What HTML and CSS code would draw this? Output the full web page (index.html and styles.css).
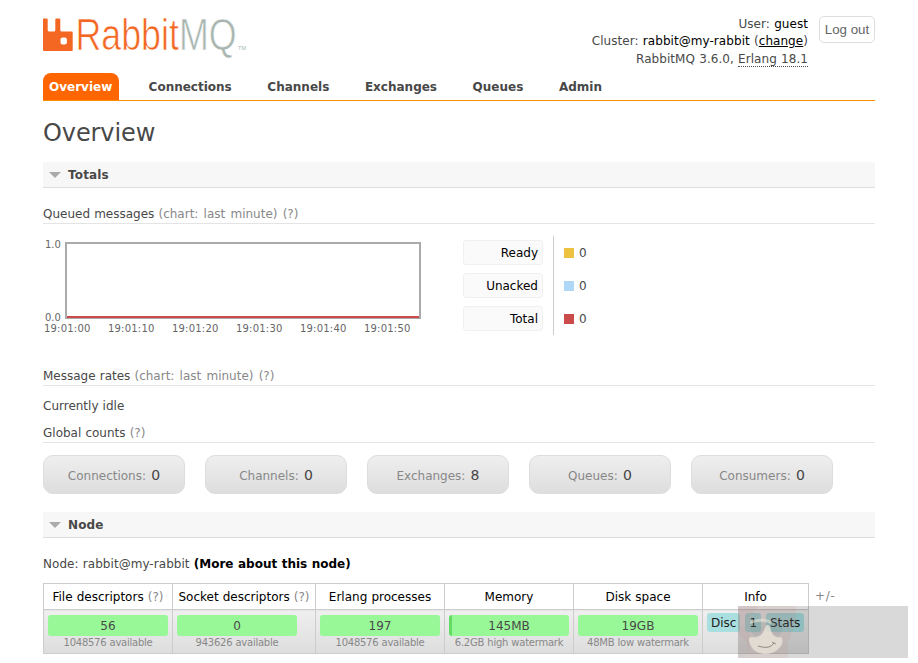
FILE: index.html
```html
<!DOCTYPE html>
<html lang="en">
<head>
  <meta charset="UTF-8">
  <title>RabbitMQ Management</title>
  <link rel="stylesheet" href="styles.css">
</head>
<body>
  <div id="head">
    <div class="logo">
      <svg width="204" height="36" viewBox="0 0 204 36">
        <path fill="#f36722" d="M1 3.500h2.700q1 0 1 1v10.500q0 1.500 1.500 1.500h4.600q1.500 0 1.500-1.500V4.500q0-1 1-1h3q1 0 1 1v10.500q0 1.500 1.500 1.500h9.900q1 0 1 1v17.500q0 1-1 1H1q-1 0-1-1V4.500q0-1 1-1zM19.500 22.500q-2 0-2 2v3q0 2 2 2h2.400q2 0 2-2V24.500q0-2-2-2z" fill-rule="evenodd"/>
        <text class="logo-text" x="32.500" y="35" textLength="161" lengthAdjust="spacingAndGlyphs">Rabbit<tspan class="logo-mq">MQ</tspan></text>
        <text class="logo-tm" x="195" y="35" textLength="8" lengthAdjust="spacingAndGlyphs">TM</text>
      </svg>
    </div>
    <div class="login">
      <div class="status">
        <p>User: <b>guest</b></p>
        <p>Cluster: <b>rabbit@my-rabbit</b> (<a href="#">change</a>)</p>
        <p>RabbitMQ 3.6.0, <abbr>Erlang 18.1</abbr></p>
      </div>
      <button class="logout">Log out</button>
    </div>
  </div>

  <ul class="menu">
    <li class="selected">Overview</li>
    <li>Connections</li>
    <li>Channels</li>
    <li>Exchanges</li>
    <li>Queues</li>
    <li>Admin</li>
  </ul>

  <div class="main">
    <h1>Overview</h1>

    <h2>Totals</h2>
    <h3 class="queued">Queued messages <span class="help">(chart: last minute) (?)</span></h3>
    <div class="chart-row">
      <div class="chart">
        <div class="y-axis"><span>1.0</span><span>0.0</span></div>
        <div class="plot"></div>
        <div class="x-axis">
          <span>19:01:00</span><span>19:01:10</span><span>19:01:20</span><span>19:01:30</span><span>19:01:40</span><span>19:01:50</span>
        </div>
      </div>
      <div class="legend-names">
        <span>Ready</span>
        <span>Unacked</span>
        <span>Total</span>
      </div>
      <div class="legend-values">
        <span><i class="ready"></i>0</span>
        <span><i class="unacked"></i>0</span>
        <span><i class="total"></i>0</span>
      </div>
    </div>

    <h3 class="rates">Message rates <span class="help">(chart: last minute) (?)</span></h3>
    <p class="idle">Currently idle</p>
    <h3 class="global">Global counts <span class="help">(?)</span></h3>
    <div class="counts">
      <div>Connections: <b>0</b></div>
      <div>Channels: <b>0</b></div>
      <div>Exchanges: <b>8</b></div>
      <div>Queues: <b>0</b></div>
      <div>Consumers: <b>0</b></div>
    </div>

    <h2>Node</h2>
    <p class="node">Node: rabbit@my-rabbit <a href="#">(More about this node)</a></p>
    <div class="node-row">
      <table>
        <colgroup><col class="fd"><col class="sd"><col class="std"><col class="std"><col class="std"><col class="info"></colgroup>
        <tr>
          <th>File descriptors <span class="help">(?)</span></th>
          <th>Socket descriptors <span class="help">(?)</span></th>
          <th>Erlang processes</th>
          <th>Memory</th>
          <th>Disk space</th>
          <th>Info</th>
        </tr>
        <tr>
          <td><div class="bar">56</div><small>1048576 available</small></td>
          <td><div class="bar">0</div><small>943626 available</small></td>
          <td><div class="bar">197</div><small>1048576 available</small></td>
          <td><div class="bar used">145MB</div><small>6.2GB high watermark</small></td>
          <td><div class="bar">19GB</div><small>48MB low watermark</small></td>
          <td><div class="tags"><span>Disc</span><span>1</span><span>Stats</span></div></td>
        </tr>
      </table>
      <span class="columns">+/-</span>
    </div>
  </div>

  <!-- translucent mascot badge over the bottom corner -->
  <div class="badge">
    <svg width="64" height="52" viewBox="0 0 64 52">
      <path d="M0 0H22Q12 6 12 20V36L8 52H0z" fill="#b99" opacity=".15"/>
      <path d="M0 0H58V16L50 36V52H9V36L0 28z" fill="#c98484" opacity=".13"/>
      <path d="M11 17Q28 12 46 18L43 28Q39 32 35 27L32 20H27L24 28Q17 32 13 26z" fill="#5f8484" opacity=".13"/>
      <path d="M12 15Q25 10 34 15L33 18Q22 14 12 18z" fill="#eee9d8" opacity=".5"/>
      <path d="M28 20Q31 16 33 25Q36 33 43 31Q46 34 43 40Q37 48 27 48Q15 47 12 38Q9 31 14 31Q24 33 28 20z" fill="#ece7db" opacity=".75"/>
      <path d="M20 40Q32 44 36 37M34 36l4 2" fill="none" stroke="#8f8b83" stroke-width="1"/>
    </svg>
  </div>
</body>
</html>
```
FILE: styles.css
```css
* {
  box-sizing: border-box;
}
body {
  margin: 0;
  padding: 0 43px;
  height: 663px;
  position: relative;
  overflow: hidden;
  background: #fff;
  color: #484848;
  font: 12px/17px Verdana, "DejaVu Sans", sans-serif;
  word-spacing: .3px;
}
p, h1, h2, h3, ul {
  margin: 0;
  padding: 0;
}
a {
  color: #000;
}
.help {
  color: #888;
  word-spacing: 1.400px;
}

/* header */
#head {
  display: flex;
  justify-content: space-between;
  height: 73px;
  padding-top: 15px;
}
.logo svg {
  display: block;
  overflow: visible;
}
.logo-text {
  font: 44px "Liberation Sans", Arial, sans-serif;
  fill: #f36722;
  stroke: #fff;
  stroke-width: .7px;
  word-spacing: 0;
}
.logo-mq {
  fill: #a9b6b0;
}
.logo-tm {
  font: 6px "Liberation Sans", Arial, sans-serif;
  fill: #a9b6b0;
}
.login {
  display: flex;
  gap: 11px;
}
.status {
  padding-top: .5px;
  text-align: right;
  line-height: 17.500px;
  letter-spacing: .06px;
}
.status b {
  font-weight: normal;
  color: #000;
}
.status abbr {
  border-bottom: 1px dotted #484848;
}
.logout {
  width: 56px;
  height: 27px;
  margin-top: 1px;
  padding: 0;
  border: 1px solid #ddd;
  border-radius: 5px;
  background: #fff;
  color: #666;
  font: 13.333px "Liberation Sans", Arial, sans-serif;
}

/* tabs */
.menu {
  display: flex;
  gap: 23.600px;
  height: 28px;
  border-bottom: 1px solid #f88f00;
  list-style: none;
  font-weight: bold;
}
.menu li {
  height: 27px;
  padding: 1px 6px 0;
  line-height: 27px;
}
.menu .selected {
  width: 76px;
  border-radius: 8px 8px 0 0;
  background: #f60;
  color: #fff;
}

/* headings */
h1 {
  padding-top: 17px;
  height: 61px;
  font-size: 24px;
  font-weight: normal;
  line-height: 30px;
  letter-spacing: -.1px;
}
h2 {
  display: flex;
  align-items: center;
  height: 26px;
  padding-top: 1px;
  padding-left: 6px;
  border-bottom: 1px solid #ddd;
  background: #f7f7f7;
  font-size: 12px;
  letter-spacing: .15px;
}
h2::before {
  content: "";
  margin: -1px 7px 0 0;
  border: 6px solid transparent;
  border-top: 6px solid #aaa;
  border-bottom: 0;
}
h3 {
  height: 19px;
  border-bottom: 1px solid #e4e4e4;
  font-size: 12px;
  font-weight: normal;
}
.queued {
  height: 18px;
  margin-top: 18px;
}

/* queued messages chart */
.chart-row {
  display: flex;
  height: 144px;
  padding-top: 12px;
}
.chart {
  display: grid;
  grid-template-columns: 22px 356px;
  grid-template-rows: 77px 18px;
  width: 420px;
  padding-top: 6px;
  color: #666;
  font-size: 10px;
}
.y-axis {
  display: flex;
  flex-direction: column;
  justify-content: space-between;
  height: 85px;
  margin-top: -3px;
  padding-left: 2px;
  line-height: 12px;
}
.plot {
  border: 2px solid #aaa;
  border-bottom-width: 1px;
  box-shadow: inset 0 -2px #cb4b4b;
}
.x-axis {
  grid-column: 1 / 3;
  display: flex;
  padding-top: 1px;
}
.x-axis span {
  width: 64px;
  flex: none;
  padding-left: 1px;
  letter-spacing: .2px;
}
.legend-names, .legend-values {
  display: flex;
  flex-direction: column;
  gap: 8px;
  height: 99px;
  padding-top: 4px;
}
.legend-names span {
  width: 80px;
  height: 25px;
  padding-right: 4px;
  border: 1px solid #f0f0f0;
  border-radius: 3px;
  background: #fafafa;
  color: #000;
  line-height: 25px;
  text-align: right;
}
.legend-values {
  margin-left: 10px;
  padding-left: 10px;
  border-left: 1px solid #ccc;
}
.legend-values span {
  display: flex;
  align-items: center;
  height: 25px;
  line-height: 25px;
  padding-top: 1px;
}
.legend-values i {
  width: 10px;
  height: 10px;
  margin: -1px 5px 0 0;
}
.ready {
  background: #edc240;
}
.unacked {
  background: #afd8f8;
}
.total {
  background: #cb4b4b;
}

/* rates and counts */
.rates {
  height: 18px;
}
.idle {
  margin-top: 12px;
}
.global {
  height: 18px;
  margin-top: 10px;
}
.counts {
  display: flex;
  gap: 20px;
  height: 69px;
  padding-top: 12px;
}
.counts div {
  width: 142px;
  height: 39px;
  border: 1px solid #ddd;
  border-radius: 10px;
  background: linear-gradient(#efefef, #ddd);
  color: #888;
  line-height: 38px;
  text-align: center;
  word-spacing: 1.400px;
}
.counts b {
  color: #444;
  font-size: 14px;
  font-weight: normal;
}

/* node table */
.node {
  margin: 18px 0 10px;
  letter-spacing: .05px;
}
.node a {
  font-weight: bold;
  letter-spacing: 0;
  text-decoration: none;
}
.node-row {
  display: flex;
}
table {
  width: 766px;
  table-layout: fixed;
  border-collapse: collapse;
}
.fd, .std {
  width: 129px;
}
.sd {
  width: 143px;
}
th, td {
  padding: 0;
  border: 1px solid #ccc;
}
th {
  height: 26px;
  padding-top: 1px;
  color: #000;
  font-weight: normal;
  white-space: nowrap;
}
td {
  height: 44px;
  padding: 5px 4px 0;
  background: linear-gradient(#efefef, #ddd);
  vertical-align: top;
}
.bar {
  width: 120px;
  height: 21px;
  border-radius: 3px;
  background: #98f898;
  line-height: 22px;
  text-align: center;
}
.used {
  background: linear-gradient(90deg, #63dc63 3px, #98f898 3px);
}
small {
  display: block;
  width: 120px;
  color: #888;
  font-size: 10px;
  line-height: 13px;
  letter-spacing: -.25px;
  text-align: center;
  white-space: nowrap;
}
.tags {
  display: flex;
  gap: 5px;
  margin-top: -2px;
}
.tags span {
  height: 19px;
  padding: 0 4px;
  border-radius: 3px;
  background: #aadfdf;
  color: #222;
  line-height: 20px;
}
.tags span:last-child {
  width: 40px;
  letter-spacing: -.1px;
}
.columns {
  margin: 5px 0 0 6px;
  color: #888;
  letter-spacing: .7px;
}

.badge {
  position: absolute;
  left: 738px;
  top: 606px;
  width: 170px;
  height: 52px;
  background: rgba(0, 0, 0, .15);
}
.badge svg {
  display: block;
}
```
